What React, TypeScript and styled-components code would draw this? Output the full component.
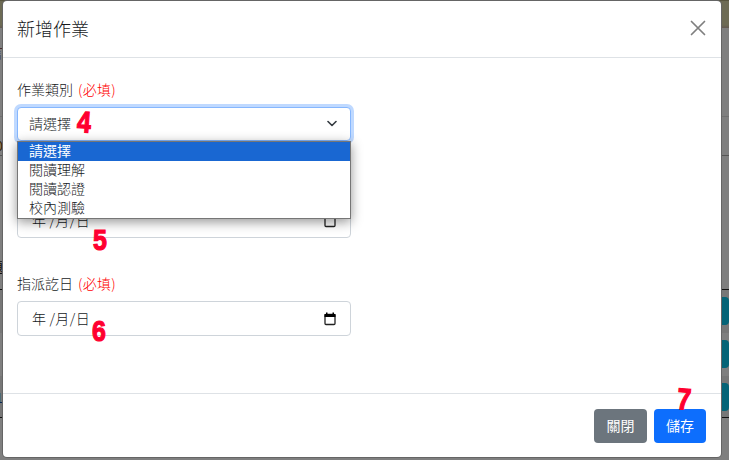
import React from "react";
import styled, { createGlobalStyle } from "styled-components";

const GlobalStyle = createGlobalStyle`
  * { box-sizing: border-box; }
  html, body { margin: 0; height: 100%; overflow: hidden; }
  body {
    font-family: "Noto Sans CJK TC", "Liberation Sans", sans-serif;
    font-size: 14px;
    font-weight: 300;
    color: #16191c;
  }
`;

const Screen = styled.div`
  position: relative;
  width: 729px;
  height: 460px;
  overflow: hidden;
  background: #7f7f7f;
`;

const Banner = styled.div`
  height: 28px;
  background: linear-gradient(#57543f 0 1px, #6d6b55 1px 25px, #635952 28px);
`;

const PageRow = styled.div<{ $height: number; $line?: string; $shade?: string; $end?: boolean }>`
  display: flex;
  justify-content: space-between;
  align-items: ${(p) => (p.$end ? "flex-end" : "center")};
  height: ${(p) => p.$height}px;
  background: ${(p) => p.$shade ?? "#7f7f7f"};
  border-bottom: 1px solid ${(p) => p.$line ?? "transparent"};
`;

const Clipped = styled.span<{ $color: string }>`
  display: flex;
  justify-content: flex-end;
  width: 3px;
  height: 18px;
  overflow: hidden;
  line-height: 18px;
  font-weight: 400;
  color: ${(p) => p.$color};
`;

const PageButton = styled.div`
  width: 20px;
  height: 28px;
  border-radius: 4px;
  background: #056477;
`;

const Modal = styled.section`
  position: absolute;
  left: 3px;
  top: 1px;
  width: 718px;
  height: 456px;
  display: flex;
  flex-direction: column;
  background: #fff;
  border-radius: 4px;
  box-shadow: 0 0 0 1px #656565;
`;

const Header = styled.header`
  display: flex;
  align-items: center;
  justify-content: space-between;
  height: 57px;
  padding: 0 15px 2px 14px;
  border-bottom: 1px solid #dee2e6;
`;

const Title = styled.h5`
  margin: 0;
  font-size: 18px;
  font-weight: 300;
  line-height: 27px;
`;

const CloseButton = styled.button`
  display: flex;
  padding: 0;
  border: 0;
  background: none;
`;

const Body = styled.div`
  flex: 1;
  padding: 20px 14px 0;
`;

const Field = styled.div<{ $top?: number }>`
  width: 334px;
  margin-top: ${(p) => p.$top ?? 0}px;
`;

const Label = styled.label`
  display: block;
  height: 29px;
  line-height: 22px;
`;

const Required = styled.span`
  margin-left: 5px;
  letter-spacing: 0.25px;
  color: #ff0000;
`;

const Control = styled.div<{ $focus?: boolean }>`
  position: relative;
  display: flex;
  align-items: center;
  justify-content: space-between;
  height: ${(p) => (p.$focus ? 34 : 35)}px;
  padding: 0 13px 0 ${(p) => (p.$focus ? 11 : 14)}px;
  border: 1px solid ${(p) => (p.$focus ? "#86b7fe" : "#ced4da")};
  border-radius: 4px;
  background: #fff;
  box-shadow: ${(p) => (p.$focus ? "0 0 0 3px #bfd9ff" : "none")};
`;

const Value = styled.span`
  line-height: 20px;
  padding-bottom: 2px;
`;

const DateValue = styled(Value)`
  display: flex;
  gap: 3px;
  letter-spacing: 0.4px;
`;

const Menu = styled.ul`
  position: absolute;
  z-index: 1;
  left: -1px;
  top: 33px;
  width: 334px;
  height: 78px;
  margin: 0;
  padding: 0;
  list-style: none;
  background: #fff;
  border: 1px solid #767676;
  box-shadow: 0 3px 11px rgba(0, 0, 0, 0.42);
`;

const Option = styled.li<{ $selected?: boolean }>`
  height: 19px;
  padding-left: 11px;
  line-height: 17px;
  background: ${(p) => (p.$selected ? "#1967d2" : "#fff")};
  color: ${(p) => (p.$selected ? "#fff" : "#16191c")};
  font-weight: ${(p) => (p.$selected ? 400 : 300)};
`;

const Footer = styled.footer`
  display: flex;
  justify-content: flex-end;
  gap: 7px;
  height: 64px;
  padding: 15px 15px 0;
  border-top: 1px solid #dee2e6;
`;

const Button = styled.button<{ $primary?: boolean }>`
  width: ${(p) => (p.$primary ? 52 : 53)}px;
  height: 34px;
  padding: 0 0 2px;
  border: 0;
  border-radius: 4px;
  font: inherit;
  font-weight: 400;
  color: #fff;
  background: ${(p) => (p.$primary ? "#0d6efd" : "#6c757d")};
`;

const Mark = styled.span<{ $x: number; $y: number; $tilt?: number }>`
  position: absolute;
  z-index: 2;
  left: ${(p) => p.$x}px;
  top: ${(p) => p.$y}px;
  width: 16px;
  height: 22px;
  text-align: center;
  font: bold 29px/22px "Liberation Sans", sans-serif;
  color: #ff0030;
  -webkit-text-stroke: 1.2px #ff0030;
  transform: rotate(${(p) => p.$tilt ?? 0}deg) scale(0.86, 1.03);
`;

const CalendarIcon = () => (
  <svg width="14" height="14" viewBox="0 0 14 14">
    <rect x="2" y="2.5" width="10" height="10" rx="1" fill="none" stroke="#222" strokeWidth="1.3" />
    <path d="M1.5 2h11v3h-11zM3 .5h1.5V2H3zM9.5.5H11V2H9.5z" fill="#000" />
  </svg>
);

const DateInput = () => (
  <Control>
    <DateValue>
      <span>年</span>
      <span>/月/日</span>
    </DateValue>
    <CalendarIcon />
  </Control>
);

const options = ["請選擇", "閱讀理解", "閱讀認證", "校內測驗"];

export default function App() {
  return (
    <>
      <GlobalStyle />
      <Screen>
        <Banner />
        <PageRow $height={34} $end>
          <Clipped $color="#452b2b">言</Clipped>
        </PageRow>
        <PageRow $height={55} $line="#707070" />
        <PageRow $height={17} />
        <PageRow $height={22} $line="#555">
          <Clipped $color="#3c2500">0</Clipped>
        </PageRow>
        <PageRow $height={120} $end>
          <Clipped $color="#101010">題</Clipped>
        </PageRow>
        <PageRow $height={14} $line="#111" />
        <PageRow $height={43} $shade="#777">
          <i />
          <PageButton />
        </PageRow>
        <PageRow $height={43}>
          <i />
          <PageButton />
        </PageRow>
        <PageRow $height={42} $line="#111" $shade="#777">
          <Clipped $color="#082850">1</Clipped>
          <PageButton />
        </PageRow>
        <Modal>
          <Header>
            <Title>新增作業</Title>
            <CloseButton aria-label="關閉">
              <svg width="16" height="16" viewBox="0 0 16 16">
                <path d="M1.5 1.5l13 13M14.5 1.5l-13 13" stroke="#7f7f7f" strokeWidth="1.7" strokeLinecap="round" />
              </svg>
            </CloseButton>
          </Header>
          <Body>
            <Field>
              <Label>
                作業類別<Required>(必填)</Required>
              </Label>
              <Control $focus>
                <Value>請選擇</Value>
                <svg width="10" height="8" viewBox="0 0 10 8">
                  <path d="M1 1.5l4 4 4-4" fill="none" stroke="#343a40" strokeWidth="1.6" strokeLinecap="round" strokeLinejoin="round" />
                </svg>
                <Menu>
                  {options.map((name, i) => (
                    <Option key={name} $selected={i === 0}>
                      {name}
                    </Option>
                  ))}
                </Menu>
              </Control>
            </Field>
            <Field $top={62}>
              <DateInput />
            </Field>
            <Field $top={34}>
              <Label>
                指派訖日<Required>(必填)</Required>
              </Label>
              <DateInput />
            </Field>
          </Body>
          <Footer>
            <Button>關閉</Button>
            <Button $primary>儲存</Button>
          </Footer>
        </Modal>
        <Mark $x={76} $y={111} $tilt={4}>4</Mark>
        <Mark $x={92} $y={229}>5</Mark>
        <Mark $x={91} $y={320}>6</Mark>
        <Mark $x={676} $y={388} $tilt={5}>7</Mark>
      </Screen>
    </>
  );
}
